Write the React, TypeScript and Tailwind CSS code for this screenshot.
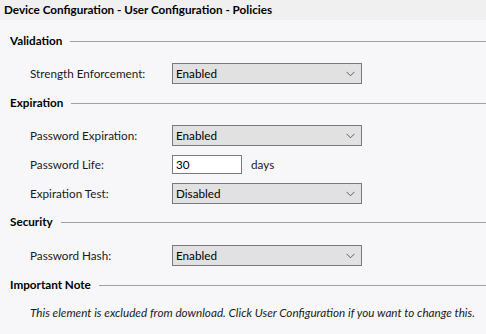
const FONT = "font-['Segoe_UI','Lato','Open_Sans',sans-serif]";

function Chevron() {
  return (
    <svg width="9" height="6" viewBox="0 0 9 6" className="shrink-0">
      <path d="M0.5 0.8 L4.5 4.8 L8.5 0.8" fill="none" stroke="#606060" strokeWidth="1" />
    </svg>
  );
}

function Select({ value }: { value: string }) {
  return (
    <div className="flex h-[21px] w-[190px] items-center justify-between border border-[#7a7a7a] bg-[#e1e1e1] pl-[3px] pr-[6px] text-black">
      <span>{value}</span>
      <Chevron />
    </div>
  );
}

function Heading({ title, className = '' }: { title: string; className?: string }) {
  return (
    <div className={`flex h-[20px] items-center gap-[8px] pl-[10px] ${className}`}>
      <span className="font-bold text-black">{title}</span>
      <div className="h-px flex-1 bg-[#a0a0a0]" />
    </div>
  );
}

function Row({ label, children, className = '' }: { label: string; children: React.ReactNode; className?: string }) {
  return (
    <div className={`flex h-[21px] items-center pl-[30px] ${className}`}>
      <span className="w-[142px] shrink-0 text-[#1a1a1a]">{label}</span>
      {children}
    </div>
  );
}

export default function App() {
  return (
    <div className={`h-[334px] w-[486px] overflow-hidden bg-[#f7f7f9] text-[11.7px] leading-none ${FONT}`}>
      <div className="flex h-[20px] items-center bg-[#f0f0f0] pl-[4px] font-bold text-black">
        Device Configuration - User Configuration - Policies
      </div>

      <Heading title="Validation" className="mt-[11px]" />
      <Row label="Strength Enforcement:" className="mt-[12px]">
        <Select value="Enabled" />
      </Row>

      <Heading title="Expiration" className="mt-[9px]" />
      <div className="mt-[12px] flex flex-col gap-[8px]">
        <Row label="Password Expiration:">
          <Select value="Enabled" />
        </Row>
        <Row label="Password Life:">
          <div className="flex h-[19px] w-[70px] items-center border border-[#7a7a7a] bg-white pl-[3px] text-black">
            30
          </div>
          <span className="ml-[9px] text-[#1a1a1a]">days</span>
        </Row>
        <Row label="Expiration Test:">
          <Select value="Disabled" />
        </Row>
      </div>

      <Heading title="Security" className="mt-[8px]" />
      <Row label="Password Hash:" className="mt-[13px]">
        <Select value="Enabled" />
      </Row>

      <Heading title="Important Note" className="mt-[9px]" />
      <p className="mt-[12px] whitespace-nowrap pl-[30px] italic text-[#1a1a1a]">
        This element is excluded from download. Click User Configuration if you want to change this.
      </p>
    </div>
  );
}
